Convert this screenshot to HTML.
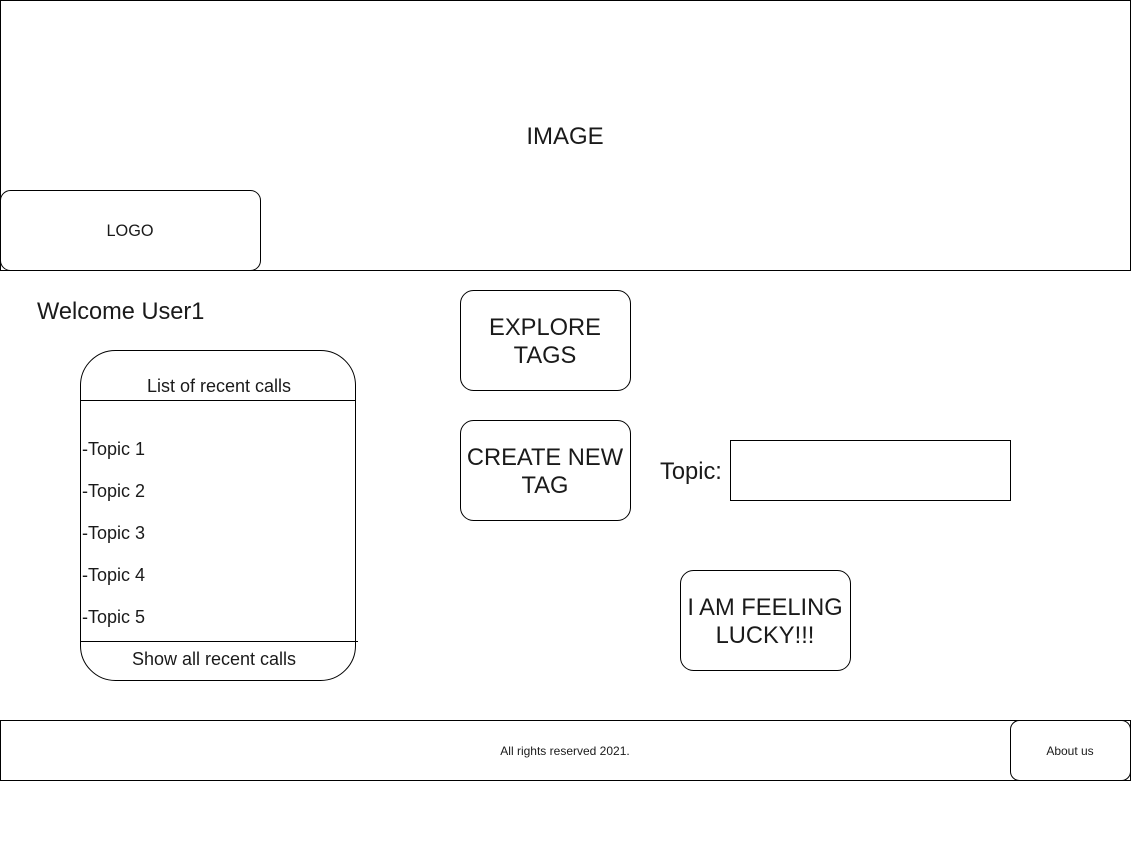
<!DOCTYPE html>
<html><head><meta charset="utf-8"><style>
html,body{margin:0;padding:0;background:#fff;width:1131px;height:861px;overflow:hidden}
svg{display:block}
text{font-family:"Liberation Sans",Arial,sans-serif;fill:#1a1a1a}
</style></head><body>
<svg width="1131" height="861" viewBox="0 0 1131 861">
<g fill="none" stroke="#000" stroke-width="1">
<rect x="0.5" y="0.5" width="1130" height="270"/>
<rect x="0.5" y="190.5" width="260" height="80" rx="10"/>
<path d="M80.5 400.5 V385 A35 35 0 0 1 115.5 350.5 H320.5 A35 35 0 0 1 355.5 385 V641.5 H80.5 Z"/>
<line x1="80.5" y1="400.5" x2="355.5" y2="400.5"/>
<path d="M80.5 641.5 V645 A35 35 0 0 0 115.5 680.5 H320.5 A35 35 0 0 0 355.5 645 V641.5" />
<line x1="80.5" y1="641.5" x2="358" y2="641.5"/>
<rect x="460.5" y="290.5" width="170" height="100" rx="13"/>
<rect x="460.5" y="420.5" width="170" height="100" rx="13"/>
<rect x="730.5" y="440.5" width="280" height="60"/>
<rect x="680.5" y="570.5" width="170" height="100" rx="13"/>
<rect x="0.5" y="720.5" width="1130" height="60"/>
<rect x="1010.5" y="720.5" width="120" height="60" rx="9"/>
</g>
<text x="565" y="144" font-size="24" text-anchor="middle">IMAGE</text>
<text x="130" y="236" font-size="16.3" text-anchor="middle">LOGO</text>
<text x="37" y="319" font-size="23.6">Welcome User1</text>
<text x="219" y="392" font-size="18" text-anchor="middle">List of recent calls</text>
<text x="82" y="455" font-size="18">-Topic 1</text>
<text x="82" y="497" font-size="18">-Topic 2</text>
<text x="82" y="539" font-size="18">-Topic 3</text>
<text x="82" y="581" font-size="18">-Topic 4</text>
<text x="82" y="623" font-size="18">-Topic 5</text>
<text x="214" y="665" font-size="18" text-anchor="middle">Show all recent calls</text>
<text x="545" y="335" font-size="23.7" text-anchor="middle">EXPLORE</text>
<text x="545" y="363" font-size="23.7" text-anchor="middle">TAGS</text>
<text x="545" y="465" font-size="23.7" text-anchor="middle">CREATE NEW</text>
<text x="545" y="493" font-size="23.7" text-anchor="middle">TAG</text>
<text x="660" y="479" font-size="23.7">Topic:</text>
<text x="765" y="615" font-size="23.7" text-anchor="middle">I AM FEELING</text>
<text x="765" y="643" font-size="23.7" text-anchor="middle">LUCKY!!!</text>
<text x="565" y="755" font-size="12" text-anchor="middle">All rights reserved 2021.</text>
<text x="1070" y="755" font-size="12" text-anchor="middle">About us</text>
</svg>
</body></html>
